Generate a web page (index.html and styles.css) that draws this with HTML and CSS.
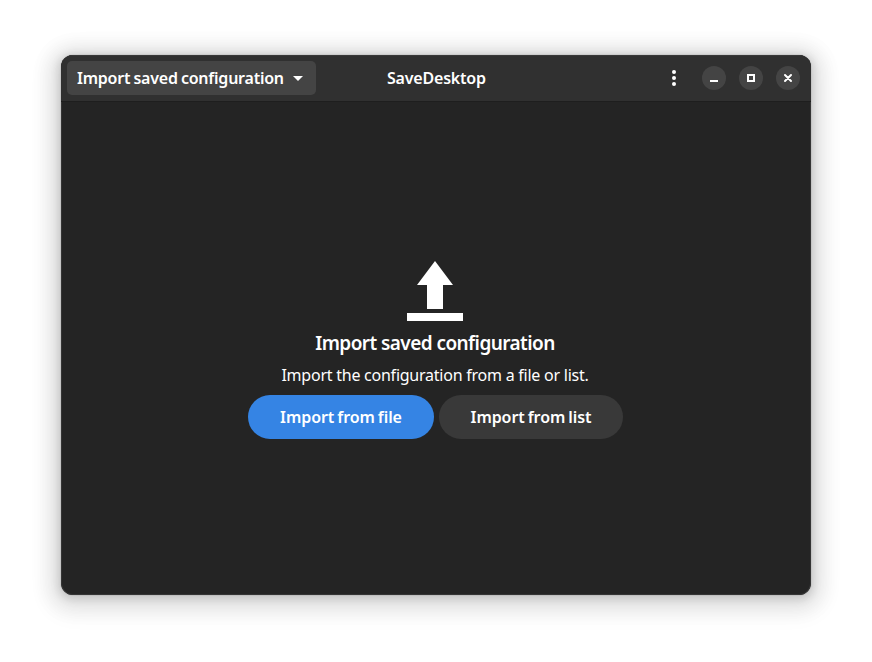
FILE: index.html
```html
<!DOCTYPE html>
<html lang="en">
<head>
<meta charset="utf-8">
<title>SaveDesktop</title>
<link rel="stylesheet" href="styles.css">
</head>
<body>
<div class="window">
  <header class="headerbar">
    <div class="start">
      <button class="mode"><span class="mode-label">Import saved configuration</span>
        <svg class="caret" width="10" height="5" viewBox="0 0 10 5"><path d="M0 0h10L5 5z" fill="#fff"/></svg>
      </button>
    </div>
    <h1 class="title">SaveDesktop</h1>
    <div class="end">
      <button class="menu" aria-label="Main menu"><svg width="16" height="16" viewBox="0 0 16 16" fill="#fff"><circle cx="8" cy="2" r="2"/><circle cx="8" cy="8" r="2"/><circle cx="8" cy="14" r="2"/></svg></button>
      <button class="control" aria-label="Minimize"><svg width="16" height="16" viewBox="0 0 16 16"><path d="M4 10h8v2H4z" fill="#fff"/></svg></button>
      <button class="control" aria-label="Maximize"><svg width="16" height="16" viewBox="0 0 16 16"><path d="M5 5h6v6H5z" fill="none" stroke="#fff" stroke-width="2"/></svg></button>
      <button class="control" aria-label="Close"><svg width="16" height="16" viewBox="0 0 16 16"><path d="M5 5l6 6M11 5l-6 6" stroke="#fff" stroke-width="2" stroke-linecap="round"/></svg></button>
    </div>
  </header>
  <main class="status">
    <svg class="upload" width="56" height="60" viewBox="0 0 56 60"><path d="M28 0l18 24H36v24H20V24H10zM0 52h56v8H0z" fill="#fff"/></svg>
    <h2 class="heading">Import saved configuration</h2>
    <p class="description">Import the configuration from a file or list.</p>
    <div class="actions">
      <button class="pill suggested">Import from file</button>
      <button class="pill list">Import from list</button>
    </div>
  </main>
</div>
</body>
</html>
```
FILE: styles.css
```css
* { box-sizing: border-box; }
body {
  margin: 0;
  height: 662px;
  padding: 55px 61px;
  background: #fff;
  color: #fff;
  font-family: "Noto Sans", sans-serif;
  overflow: hidden;
}
button {
  border: 0;
  padding: 0;
  color: inherit;
  font: inherit;
  display: flex;
  align-items: center;
  justify-content: center;
  white-space: nowrap;
}
svg { display: block; flex: none; }
.window {
  width: 750px;
  height: 540px;
  border-radius: 12px;
  overflow: hidden;
  background: #242424;
  box-shadow: 0 2px 8px 2px rgba(0, 0, 0, .13), 0 3px 20px 10px rgba(0, 0, 0, .09), 0 6px 20px 16px rgba(0, 0, 0, .04), 0 0 0 1px rgba(0, 0, 0, .05), inset 0 0 0 1px #353535;
}
.headerbar {
  height: 47px;
  padding: 0 11px 0 6px;
  background: #303030;
  border-bottom: 1px solid #1e1e1e;
  box-shadow: inset 0 1px #393939;
  display: grid;
  grid-template-columns: 320px 100px 1fr;
  align-items: center;
}
.mode {
  width: 249px;
  height: 34px;
  padding: 0 13px 0 10px;
  border-radius: 5px;
  background: #444;
  justify-content: space-between;
  font-size: 16px;
  font-weight: 600;
}
.mode-label { letter-spacing: -.23px; word-spacing: -.7px; }
.caret { margin-top: 1px; }
.title {
  margin: 0;
  font-size: 16px;
  line-height: 24px;
  font-weight: 600;
  letter-spacing: -.2px;
}
.end { display: flex; justify-content: flex-end; align-items: center; gap: 13px; }
.menu { background: none; width: 16px; margin-right: 7px; }
.control { width: 24px; height: 24px; border-radius: 50%; background: #444; }
.status {
  height: 493px;
  width: 748px;
  padding-top: 159px;
  display: flex;
  flex-direction: column;
  align-items: center;
}
.heading {
  margin: 8px 0 0;
  font-size: 19px;
  line-height: 28px;
  font-weight: 600;
  letter-spacing: -.57px;
}
.description {
  margin: 6px 0 0;
  font-size: 16px;
  line-height: 24px;
  letter-spacing: -.24px;
}
.actions { display: flex; gap: 5px; margin: 8px 0 0 1px; }
.pill {
  height: 44px;
  width: 186px;
  border-radius: 22px;
  background: #393939;
  font-size: 16px;
  font-weight: 600;
  letter-spacing: -.08px;
  word-spacing: -1px;
}
.suggested { background: #3584e4; }
.list { width: 184px; }
```
